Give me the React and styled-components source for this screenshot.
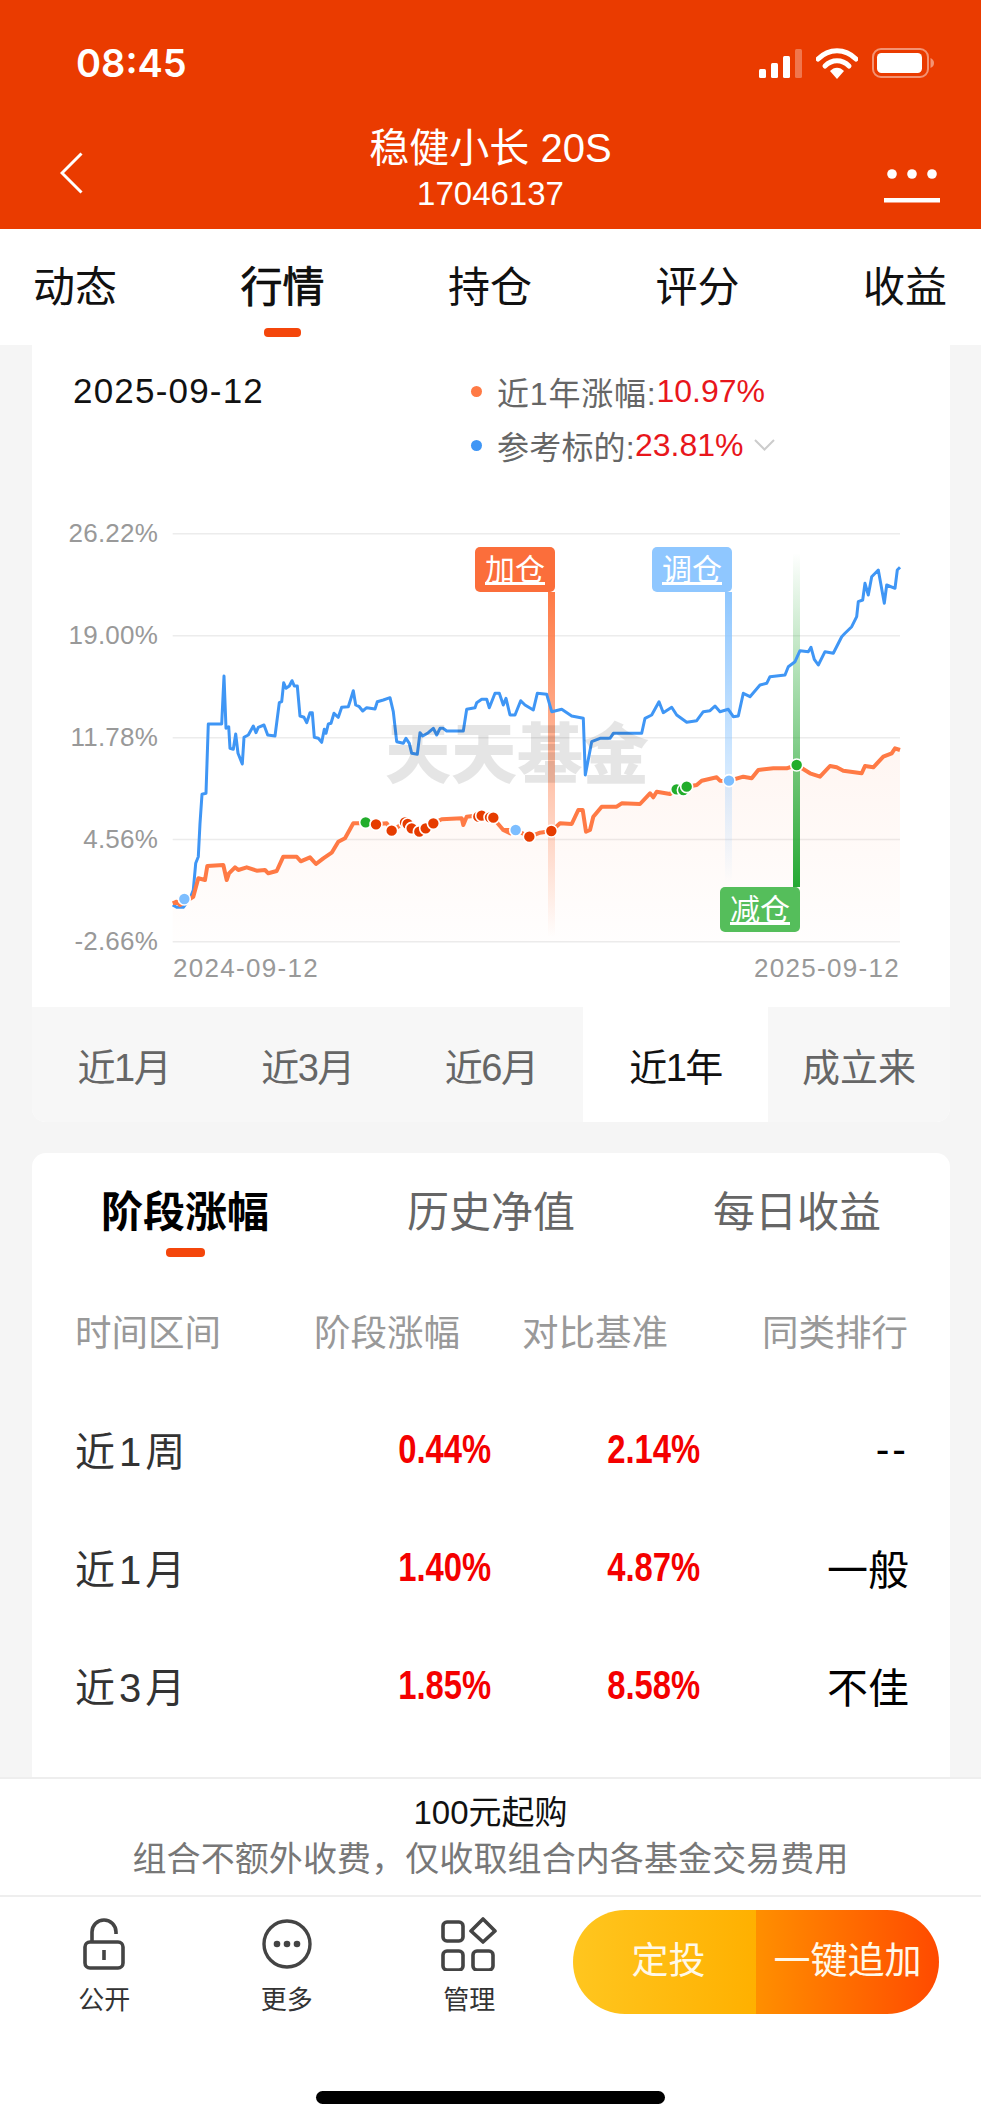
import React from 'react';
import styled, { createGlobalStyle } from 'styled-components';

const GlobalStyle = createGlobalStyle`
  html, body {
    margin: 0;
    padding: 0;
    background: #f5f5f5;
  }
  * {
    box-sizing: border-box;
  }
  body {
    font-family: "Liberation Sans", "Noto Sans CJK SC", sans-serif;
  }
`;

const Page = styled.div`
  width: 981px;
  height: 2123px;
  display: flex;
  flex-direction: column;
  overflow: hidden;
  background: #f5f5f5;
`;

const Header = styled.header`
  height: 229px;
  flex-shrink: 0;
  background: #ea3b00;
  color: #fff;
`;

const StatusBar = styled.div`
  height: 105px;
  display: flex;
  align-items: center;
  justify-content: space-between;
  padding: 21px 47px 0 76px;
`;

const Clock = styled.span`
  font-family: Inter, "Liberation Sans", sans-serif;
  font-size: 38px;
  font-weight: 600;
  line-height: 46px;
`;

const StatusIcons = styled.div`
  display: flex;
  align-items: center;
  gap: 14px;
`;

const NavBar = styled.div`
  display: grid;
  grid-template-columns: 1fr auto 1fr;
  align-items: center;
  padding: 0 41px;
`;

const BackIcon = styled.svg`
  display: block;
  margin: 27px 0 0 19px;
`;

const MoreIcon = styled.svg`
  display: block;
  justify-self: end;
  margin-top: 52px;
`;

const TitleBlock = styled.div`
  text-align: center;
`;

const Title = styled.div`
  font-size: 40px;
  line-height: 48px;
  margin-top: 19px;
`;

const SubTitle = styled.div`
  font-size: 33px;
  line-height: 40px;
  margin-top: 2px;
`;

const TabBar = styled.nav`
  height: 116px;
  flex-shrink: 0;
  display: flex;
  justify-content: space-between;
  padding: 32px 34px 0 33px;
  background: #fff;
`;

const TabItem = styled.div`
  display: flex;
  flex-direction: column;
  align-items: center;
  font-size: 42px;
  line-height: 50px;
  padding-top: 2px;
  color: #111;
  -webkit-text-stroke: ${(p) => (p.$active ? '0.7px #000' : '0')};
`;

const TabLine = styled.span`
  width: ${(p) => p.$width}px;
  height: 9px;
  margin-top: ${(p) => p.$top}px;
  border-radius: 4px;
  background: #f4460b;
`;

const Main = styled.main`
  flex: 1;
  min-height: 0;
  overflow: hidden;
  padding: 0 31px 0 32px;
`;

const ChartCard = styled.section`
  background: #fff;
  border-radius: 0 0 14px 14px;
  overflow: hidden;
`;

const Summary = styled.div`
  display: flex;
  justify-content: space-between;
  padding-top: 19px;
`;

const DateText = styled.div`
  margin-left: 41px;
  font-size: 35px;
  line-height: 54px;
  letter-spacing: 1.2px;
  color: #111;
`;

const Legend = styled.div`
  width: 479px;
`;

const LegendRow = styled.div`
  display: flex;
  align-items: center;
  height: 54px;
  font-size: 32px;
  color: #666;
`;

const LegendLabel = styled.span`
  letter-spacing: ${(p) => p.$spacing}px;
`;

const LegendDot = styled.i`
  width: 11px;
  height: 11px;
  margin-right: 15px;
  border-radius: 50%;
  background: ${(p) => p.$color};
`;

const LegendValue = styled.span`
  color: #e8161b;
`;

const LegendChevron = styled.svg`
  margin-left: 11px;
`;

const ChartSvg = styled.svg`
  display: block;
  margin-top: 38px;
`;

const AxisText = styled.text`
  font-size: 26px;
  letter-spacing: ${(p) => p.$spacing}px;
  fill: #999;
`;

const TagText = styled.text`
  font-size: 30px;
  fill: #fff;
  text-decoration: underline;
`;

const Watermark = styled.text`
  font-size: 66px;
  font-weight: 900;
  fill: #000;
  fill-opacity: 0.1;
`;

const RangeBar = styled.div`
  display: grid;
  grid-template-columns: repeat(3, 183.67px) 185px 182px;
  height: 115px;
  background: #f7f7f7;
`;

const RangeItem = styled.div`
  display: flex;
  align-items: center;
  justify-content: center;
  font-size: 38px;
  letter-spacing: ${(p) => (p.$narrow ? '-1.5px' : '0')};
  color: ${(p) => (p.$active ? '#111' : '#666')};
  background: ${(p) => (p.$active ? '#fff' : 'transparent')};
`;

const Panel = styled.section`
  margin-top: 31px;
  padding-bottom: 60px;
  background: #fff;
  border-radius: 14px 14px 0 0;
`;

const PanelTabs = styled.div`
  display: grid;
  grid-template-columns: repeat(3, 1fr);
  padding-top: 35px;
`;

const PanelTab = styled.div`
  display: flex;
  flex-direction: column;
  align-items: center;
  font-size: 42px;
  line-height: 50px;
  font-weight: ${(p) => (p.$active ? 700 : 400)};
  color: ${(p) => (p.$active ? '#000' : '#666')};
`;

const Table = styled.div`
  padding: 0 41px 0 43px;
`;

const TableHead = styled.div`
  display: grid;
  grid-template-columns: 239px 208px 240px 1fr;
  margin: 52px 0 31px;
  font-size: 36.5px;
  line-height: 50px;
  white-space: nowrap;
  color: #999;
`;

const TableRow = styled.div`
  display: grid;
  grid-template-columns: 1fr 209px 209px 209px;
  align-items: center;
  height: 118px;
`;

const RowLabel = styled.div`
  font-size: 40px;
  letter-spacing: 4px;
  color: #333;
`;

const RowValue = styled.div`
  justify-self: end;
  font-size: 41px;
  font-weight: 700;
  color: #f40000;
  transform: scaleX(0.8);
  transform-origin: right center;
`;

const RowRank = styled.div`
  justify-self: end;
  font-size: 41px;
  letter-spacing: ${(p) => (p.$dash ? '3px' : '0')};
  color: #000;
`;

const Footer = styled.footer`
  height: 346px;
  flex-shrink: 0;
  background: #fff;
  border-top: 2px solid #eee;
`;

const Notice = styled.div`
  height: 118px;
  padding-top: 12px;
  text-align: center;
  border-bottom: 2px solid #eee;
`;

const NoticeTitle = styled.div`
  font-size: 33px;
  line-height: 44px;
  color: #111;
`;

const NoticeText = styled.div`
  font-size: 34px;
  line-height: 48px;
  letter-spacing: 0.1px;
  color: #777;
`;

const Toolbar = styled.div`
  display: flex;
  padding: 13px 42px 0 13px;
`;

const Tools = styled.div`
  display: grid;
  grid-template-columns: repeat(3, 182.5px);
  padding-top: 7px;
`;

const Tool = styled.div`
  display: flex;
  flex-direction: column;
  align-items: center;
  font-size: 26px;
  line-height: 30px;
  color: #333;
`;

const ToolIcon = styled.svg`
  display: block;
  margin-bottom: 14px;
`;

const ActionGroup = styled.div`
  display: flex;
  width: 366px;
  height: 104px;
  margin-left: auto;
  overflow: hidden;
  border-radius: 52px;
`;

const ActionButton = styled.div`
  display: flex;
  align-items: center;
  justify-content: center;
  width: ${(p) => p.$width}px;
  padding: ${(p) => p.$padding};
  font-size: 37px;
  line-height: 40px;
  color: #fff8e8;
  background: ${(p) => p.$bg};
`;

const HomeBar = styled.div`
  width: 349px;
  height: 13px;
  margin: 76px auto 0;
  border-radius: 7px;
  background: #000;
`;

const tabs = ['动态', '行情', '持仓', '评分', '收益'];
const ranges = ['近1月', '近3月', '近6月', '近1年', '成立来'];
const panelTabs = ['阶段涨幅', '历史净值', '每日收益'];
const tableHead = ['时间区间', '阶段涨幅', '对比基准', '同类排行'];
const rows = [
  { label: '近1周', gain: '0.44%', base: '2.14%', rank: '--' },
  { label: '近1月', gain: '1.40%', base: '4.87%', rank: '一般' },
  { label: '近3月', gain: '1.85%', base: '8.58%', rank: '不佳' },
];

const gridLines = [
  { y: 533.7, label: '26.22%' },
  { y: 635.7, label: '19.00%' },
  { y: 737.7, label: '11.78%' },
  { y: 839.5, label: '4.56%' },
  { y: 941.7, label: '-2.66%' },
];

// traced at 3x: [x, y], origin given per segment
const blueA = [[428,735],[440,742],[460,742],[480,715],[490,690],[497,610],[505,590],[510,490],[516,403],[528,400],[535,192],[575,192],[582,48],[588,205],[596,200],[600,265],[610,268],[617,222],[624,280],[637,312],[642,232],[655,225],[670,198],[678,218],[685,202],[702,195],[713,225],[735,228],[748,128],[755,125],[761,68],[768,85],[778,78],[786,62],[793,78],[802,78],[810,168],[822,172],[830,188],[840,158],[847,158],[853,232],[865,235],[875,247],[883,208],[888,220],[895,192],[903,190],[912,160],[925,172],[935,142],[955,140],[962,118],[970,92],[977,135],[988,140],[998,153],[1010,143],[1035,147],[1042,125],[1060,120],[1080,113],[1090,155],[1100,245],[1120,250],[1128,235],[1138,250],[1145,280],[1162,283],[1170,218],[1178,228],[1195,218],[1210,205],[1220,225],[1230,205],[1240,205],[1250,213],[1300,213],[1310,148],[1335,143],[1340,128],[1355,118],[1370,118],[1378,143],[1395,100],[1408,100],[1420,135],[1428,115],[1440,165]];
const blueB = [[105,165],[122,122],[135,135],[160,150],[172,100],[200,103],[215,155],[245,148],[275,168],[310,175],[316,345],[335,245],[360,235],[390,235],[400,220],[485,220],[495,175],[515,165],[537,125],[550,158],[575,142],[590,165],[620,187],[650,182],[670,155],[690,152],[705,138],[720,155],[745,148],[760,170],[775,168],[790,100],[810,110],[840,75],[860,70],[870,50],[915,45],[925,20],[945,5]];
const blueC = [[960,932],[985,935],[993,922],[1003,958],[1015,975],[1035,935],[1060,940],[1085,890],[1095,880],[1115,860],[1130,830],[1135,785],[1148,780],[1155,730],[1165,765],[1175,710],[1195,690],[1213,790],[1220,735],[1245,745],[1252,690],[1260,682]];
const orangeA = [[428,730],[440,725],[450,735],[490,710],[505,655],[525,660],[532,618],[580,615],[590,660],[597,640],[615,622],[625,630],[650,622],[680,632],[705,630],[715,640],[740,633],[760,590],[800,590],[812,604],[840,592],[858,612],[880,595],[905,578],[925,545],[945,535],[970,490],[1000,490],[1038,493],[1070,490],[1085,512],[1125,487],[1145,505],[1170,515],[1210,490],[1235,478],[1295,475],[1300,495],[1310,470],[1355,465],[1390,475],[1420,510],[1440,520]];
const orangeB = [[70,510],[105,510],[150,530],[180,518],[215,513],[240,490],[275,492],[295,450],[308,450],[318,515],[330,510],[340,470],[365,440],[410,440],[425,430],[480,432],[510,400],[520,412],[530,395],[570,402],[590,388],[620,380],[650,375],[665,362],[710,352],[720,362],[745,363],[790,350],[815,355],[835,330],[880,325],[920,325],[950,315],[990,340],[1020,350],[1050,318],[1070,322],[1090,332],[1145,340],[1155,318],[1180,322],[1210,290],[1235,280],[1245,265],[1260,270]];

const trace = (points, ox, oy) => points.map(([x, y]) => [ox + x / 3, oy + y / 3]);
const toPath = (points) => points.map(([x, y], i) => `${i ? 'L' : 'M'}${x.toFixed(1)} ${y.toFixed(1)}`).join(' ');

const bluePoints = [...trace(blueA, 30, 660), ...trace(blueB, 480, 660), ...trace(blueC, 480, 340)];
const orangePoints = [...trace(orangeA, 30, 660), ...trace(orangeB, 480, 660)];
const areaPath = `${toPath(orangePoints)} L900 941.7 L172.7 941.7 Z`;

const RED = '#e63c00';
const GREEN = '#22ad2b';
const SKY = '#7dbeff';

const markers = [
  ...trace([[463,717]], 30, 660).map((p) => [...p, SKY]),
  ...trace([[1007,487]], 30, 660).map((p) => [...p, GREEN]),
  ...trace([[1125,487],[1133,492],[1145,505],[1168,515],[1187,505],[1210,490],[1038,493],[1085,512],[1345,470],[1355,467],[1380,472],[1390,473]], 30, 660).map((p) => [...p, RED]),
  ...trace([[107,510]], 480, 660).map((p) => [...p, SKY]),
  ...trace([[148,530],[214,513]], 480, 660).map((p) => [...p, RED]),
  ...trace([[590,388],[610,390],[620,380],[950,315]], 480, 660).map((p) => [...p, GREEN]),
  ...trace([[747,362]], 480, 660).map((p) => [...p, SKY]),
];

const stems = [
  { id: 'stemAdd', x: 548, top: 592, bottom: 937, color: '#ff7a45', from: 592, to: 937 },
  { id: 'stemAdjust', x: 725, top: 592, bottom: 883, color: '#8fc7ff', from: 592, to: 883 },
  { id: 'stemCut', x: 793, top: 553, bottom: 887, color: '#25a933', from: 887, to: 553 },
];

const tags = [
  { x: 475, y: 547, color: '#fb6e3b', label: '加仓' },
  { x: 652, y: 547, color: '#8fc7ff', label: '调仓' },
  { x: 720, y: 887, color: '#55be5b', label: '减仓' },
];

const Chart = () => (
  <ChartSvg width="919" height="497" viewBox="32 510 919 497">
    <defs>
      <linearGradient id="areaFill" x1="0" y1="0" x2="0" y2="1">
        <stop offset="0" stopColor="#ff7a45" stopOpacity="0.07" />
        <stop offset="1" stopColor="#ff7a45" stopOpacity="0.01" />
      </linearGradient>
      {stems.map((s) => (
        <linearGradient key={s.id} id={s.id} gradientUnits="userSpaceOnUse" x1="0" y1={s.from} x2="0" y2={s.to}>
          <stop offset="0" stopColor={s.color} />
          <stop offset="1" stopColor={s.color} stopOpacity="0" />
        </linearGradient>
      ))}
    </defs>
    {gridLines.map((g) => (
      <g key={g.y}>
        <line x1="172.7" x2="900" y1={g.y} y2={g.y} stroke="#ececec" strokeWidth="1.6" />
        <AxisText $spacing={0.2} x="158" y={g.y + 8} textAnchor="end">{g.label}</AxisText>
      </g>
    ))}
    <path d={areaPath} fill="url(#areaFill)" />
    {stems.map((s) => (
      <rect key={s.id} x={s.x} y={s.top} width="7" height={s.bottom - s.top} fill={`url(#${s.id})`} />
    ))}
    <path d={toPath(bluePoints)} fill="none" stroke="#3f96f5" strokeWidth="3" strokeLinejoin="round" />
    <path d={toPath(orangePoints)} fill="none" stroke="#ff7a45" strokeWidth="4" strokeLinejoin="round" />
    <Watermark x="385" y="778">天天基金</Watermark>
    {markers.map(([x, y, color], i) => (
      <circle key={i} cx={x} cy={y} r="6" fill={color} stroke="#fff" strokeWidth="1.6" />
    ))}
    {tags.map((t) => (
      <g key={t.label}>
        <rect x={t.x} y={t.y} width="80" height="45" rx="5" fill={t.color} />
        <TagText x={t.x + 40} y={t.y + 33} textAnchor="middle">{t.label}</TagText>
      </g>
    ))}
    <AxisText $spacing={1.3} x="173" y="977">2024-09-12</AxisText>
    <AxisText $spacing={1.3} x="900" y="977" textAnchor="end">2025-09-12</AxisText>
  </ChartSvg>
);

const App = () => (
  <>
    <GlobalStyle />
    <Page>
      <Header>
        <StatusBar>
          <Clock>08:45</Clock>
          <StatusIcons>
            <svg width="43" height="29" viewBox="0 0 43 29">
              <rect x="0" y="20" width="7" height="9" rx="1.5" fill="#fff" />
              <rect x="12" y="14" width="7" height="15" rx="1.5" fill="#fff" />
              <rect x="24" y="7" width="7" height="22" rx="1.5" fill="#fff" />
              <rect x="36" y="0" width="7" height="29" rx="1.5" fill="#fff" fillOpacity="0.3" />
            </svg>
            <svg width="42" height="31" viewBox="0 0 42 31">
              <path d="M2 11 C13 0 29 0 40 11" fill="none" stroke="#fff" strokeWidth="5" strokeLinecap="round" />
              <path d="M9 18 C16 11 26 11 33 18" fill="none" stroke="#fff" strokeWidth="5" strokeLinecap="round" />
              <path d="M14 23 C18 18.5 24 18.5 28 23 L21 31 Z" fill="#fff" />
            </svg>
            <svg width="62" height="30" viewBox="0 0 62 30">
              <rect x="1" y="1" width="55" height="28" rx="8" fill="none" stroke="#fff" strokeOpacity="0.45" strokeWidth="2" />
              <rect x="5" y="5" width="45" height="20" rx="4.5" fill="#fff" />
              <path d="M58.5 10 C61 11 62 13 62 15 C62 17 61 19 58.5 20 Z" fill="#fff" fillOpacity="0.45" />
            </svg>
          </StatusIcons>
        </StatusBar>
        <NavBar>
          <BackIcon width="23" height="42" viewBox="0 0 23 42">
            <path d="M21.5 1.5 L2 21 L21.5 40.5" fill="none" stroke="#fff" strokeWidth="3" />
          </BackIcon>
          <TitleBlock>
            <Title>稳健小长 20S</Title>
            <SubTitle>17046137</SubTitle>
          </TitleBlock>
          <MoreIcon width="56" height="35" viewBox="0 0 56 35">
            <circle cx="8" cy="6" r="4.8" fill="#fff" />
            <circle cx="28" cy="6" r="4.8" fill="#fff" />
            <circle cx="48" cy="6" r="4.8" fill="#fff" />
            <rect x="0" y="30" width="56" height="4.5" fill="#fff" />
          </MoreIcon>
        </NavBar>
      </Header>

      <TabBar>
        {tabs.map((t, i) => (
          <TabItem key={t} $active={i === 1}>
            {t}
            {i === 1 && <TabLine $width={37} $top={15} />}
          </TabItem>
        ))}
      </TabBar>

      <Main>
        <ChartCard>
          <Summary>
            <DateText>2025-09-12</DateText>
            <Legend>
              <LegendRow>
                <LegendDot $color="#ff7a45" />
                <LegendLabel $spacing={0.8}>近1年涨幅:</LegendLabel>
                <LegendValue>10.97%</LegendValue>
              </LegendRow>
              <LegendRow>
                <LegendDot $color="#3f96f5" />
                <LegendLabel $spacing={0.2}>参考标的:</LegendLabel>
                <LegendValue>23.81%</LegendValue>
                <LegendChevron width="21" height="12" viewBox="0 0 21 12">
                  <path d="M1 1 L10.5 10.5 L20 1" fill="none" stroke="#ccc" strokeWidth="2" />
                </LegendChevron>
              </LegendRow>
            </Legend>
          </Summary>
          <Chart />
          <RangeBar>
            {ranges.map((r, i) => (
              <RangeItem key={r} $active={i === 3} $narrow={i < 4}>{r}</RangeItem>
            ))}
          </RangeBar>
        </ChartCard>

        <Panel>
          <PanelTabs>
            {panelTabs.map((t, i) => (
              <PanelTab key={t} $active={i === 0}>
                {t}
                {i === 0 && <TabLine $width={39} $top={10} />}
              </PanelTab>
            ))}
          </PanelTabs>
          <Table>
            <TableHead>
              {tableHead.map((h) => (
                <div key={h}>{h}</div>
              ))}
            </TableHead>
            {rows.map((r) => (
              <TableRow key={r.label}>
                <RowLabel>{r.label}</RowLabel>
                <RowValue>{r.gain}</RowValue>
                <RowValue>{r.base}</RowValue>
                <RowRank $dash={r.rank === '--'}>{r.rank}</RowRank>
              </TableRow>
            ))}
          </Table>
        </Panel>
      </Main>

      <Footer>
        <Notice>
          <NoticeTitle>100元起购</NoticeTitle>
          <NoticeText>组合不额外收费，仅收取组合内各基金交易费用</NoticeText>
        </Notice>
        <Toolbar>
          <Tools>
            <Tool>
              <ToolIcon width="42" height="54" viewBox="0 0 42 54" fill="none" stroke="#444" strokeWidth="3.6">
                <path d="M9 25 V15 A12 12 0 0 1 33 15 V17" />
                <rect x="2" y="25" width="38" height="26" rx="5" />
                <path d="M21 33 V43" />
              </ToolIcon>
              公开
            </Tool>
            <Tool>
              <ToolIcon width="50" height="54" viewBox="0 0 50 54">
                <circle cx="25" cy="27" r="23" fill="none" stroke="#444" strokeWidth="3.4" />
                <circle cx="15" cy="27" r="3.3" fill="#444" />
                <circle cx="25" cy="27" r="3.3" fill="#444" />
                <circle cx="35" cy="27" r="3.3" fill="#444" />
              </ToolIcon>
              更多
            </Tool>
            <Tool>
              <ToolIcon width="58" height="54" viewBox="0 0 58 54" fill="none" stroke="#444" strokeWidth="3.6">
                <rect x="3" y="5" width="20" height="19" rx="4" />
                <rect x="3" y="34" width="20" height="19" rx="4" />
                <rect x="33" y="34" width="20" height="19" rx="4" />
                <path d="M43 2 L55 14 L43 25 L31 14 Z" strokeLinejoin="round" />
              </ToolIcon>
              管理
            </Tool>
          </Tools>
          <ActionGroup>
            <ActionButton $width={183} $padding="0 0 0 8px" $bg="linear-gradient(90deg, #ffc61f, #ffb000)">定投</ActionButton>
            <ActionButton $width={183} $padding="0" $bg="linear-gradient(90deg, #ff8f00, #ff4a00)">一键追加</ActionButton>
          </ActionGroup>
        </Toolbar>
        <HomeBar />
      </Footer>
    </Page>
  </>
);

export default App;
